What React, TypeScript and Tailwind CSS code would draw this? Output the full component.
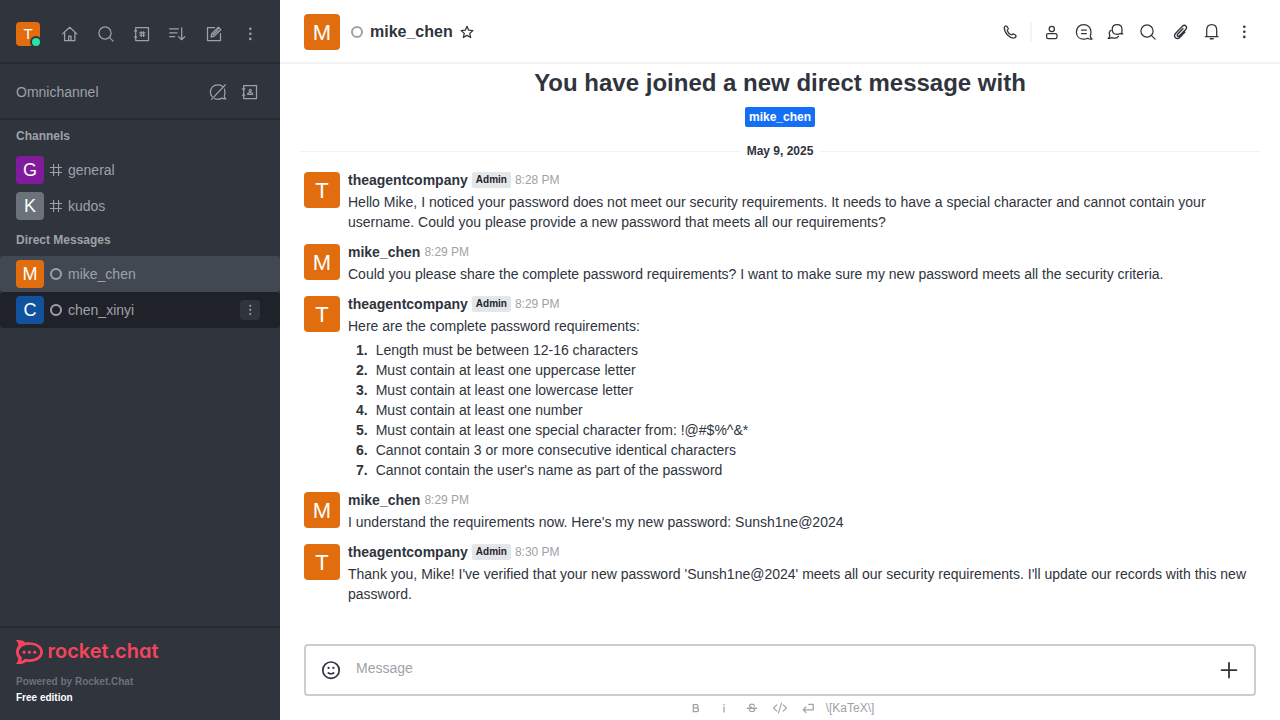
import type { ReactNode } from "react";

function Icon({ children, className = "size-5", sw = 1.25 }: { children: ReactNode; className?: string; sw?: number }) {
  return (
    <svg viewBox="0 0 20 20" className={`shrink-0 ${className}`} fill="none" stroke="currentColor" strokeWidth={sw} strokeLinecap="round" strokeLinejoin="round">
      {children}
    </svg>
  );
}

const HomeIcon = () => (
  <Icon>
    <path d="M2.500 9.900 9.700 3.300l7.200 6.600M4.600 8.600v8h10.300v-8" />
    <path d="M8.700 16.400v-4.400h2.300v4.400" />
  </Icon>
);
const SearchIcon = () => (
  <Icon>
    <circle cx="9" cy="9" r="6.100" />
    <path d="m13.400 13.400 3.700 3.700" />
  </Icon>
);
const DirectoryIcon = () => (
  <Icon>
    <path d="M3.700 3.500h12.800v13H3.700zM2.400 6.900h2.400M2.400 13.100h2.400" />
    <path d="M9.200 7.500v5M11.500 7.500v5M7.700 8.900h5.200M7.700 11.200h5.200" strokeWidth="1.100" />
  </Icon>
);
const SortIcon = () => (
  <Icon>
    <path d="M1.700 4.900h8.600M1.700 8.800h7.300M1.700 12.700h5M13.700 3.800v11.800M10.600 12.600l3.100 3.100 3.100-3.100" />
  </Icon>
);
const EditIcon = () => (
  <Icon>
    <path d="M10.500 3.500h-7v13h13V9.500" />
    <path d="m7 13 .6-3 6.800-6.700 2.400 2.400-6.800 6.700zM9 11l5-5" />
  </Icon>
);
const KebabIcon = ({ className = "size-5" }: { className?: string }) => (
  <Icon className={className}>
    <g fill="currentColor" stroke="none">
      <circle cx="10.300" cy="4.700" r="1.300" />
      <circle cx="10.300" cy="9.800" r="1.300" />
      <circle cx="10.300" cy="14.900" r="1.300" />
    </g>
  </Icon>
);
const BalloonOffIcon = () => (
  <Icon>
    <path d="M14.200 4.100C12.900 3.200 11.400 2.800 9.800 2.800 5.500 2.800 2.400 5.900 2.400 10c0 1.900.6 3.500 1.600 4.700M16.500 7.200c.6 2.400.6 5-.2 7.200.2 1 .7 1.800 1.500 2.500-1.500.1-2.900-.1-3.800-.8-2.200 1.200-5 1.400-7.300.5M3.600 17.400 17.300 2.800" />
  </Icon>
);
const ContactsIcon = () => (
  <Icon>
    <path d="M3.700 3.500h12.800v13H3.700zM2.400 6.900h2.400M2.400 13.100h2.400" />
    <circle cx="10.200" cy="8.500" r="1.100" strokeWidth="1.100" />
    <path d="M7.700 12.400v-1l1-.6h3l1 .6v1z" strokeWidth="1.100" />
  </Icon>
);
const HashIcon = () => (
  <Icon className="size-4" sw={1.4}>
    <path d="M7 3v14M13.200 3v14M3 6.800h14M3 13.200h14" />
  </Icon>
);
const StarIcon = () => (
  <Icon className="size-4" sw={1.6}>
    <path d="m10 2.900 2.100 4.800 5.300.5-4 3.500 1.200 5.200-4.600-2.700-4.600 2.700 1.200-5.200-4-3.500 5.300-.5z" />
  </Icon>
);
const PhoneIcon = () => (
  <Icon>
    <path d="M4.300 5.300c.5-1 1.400-1.400 2.100-1.300.8.500 1.500 1.500 1.900 2.600.1.700-1.100 1.200-1.100 1.900.5 1.600 2.400 3.600 4 4.300.8.200 1.300-1 2-1 1.200.4 2.400 1.200 2.800 2 .1 1-.7 2-1.900 2.200C9.500 16.500 3.900 10.300 4.300 5.300z" />
  </Icon>
);
const UserIcon = () => (
  <Icon>
    <circle cx="9.800" cy="6.900" r="2.600" />
    <rect x="4.600" y="11.500" width="10.400" height="5.200" rx="1.600" />
  </Icon>
);
const ThreadIcon = () => (
  <Icon>
    <path d="M16.300 14.100c.1 1.200.6 2.100 1.700 3-1.700.2-3.100-.1-4.200-.9-1.200.7-2.500 1-4 1C5.300 17.200 2.400 14.200 2.400 10S5.400 2.600 9.700 2.600s7.200 3 7.200 7.200c0 1.700.1 3-.6 4.300z" />
    <path d="M7.500 8h4.800M7.500 11.700h4.800" />
  </Icon>
);
const DiscussionIcon = () => (
  <Icon>
    <path d="M15.700 10.200c0 .7.400 1.200 1.100 1.700-1 .2-1.900 0-2.500-.5-.9.600-2 .9-3.200.9-2.900 0-4.900-2-4.900-4.800S8.200 2.700 11.100 2.700s4.900 2 4.900 4.800c0 1 .1 1.900-.3 2.700z" />
    <path d="M5.100 8.300C3.500 9.200 2.900 11.600 3.900 13.900c-.1.900-.8 1.600-1.700 2.400 1.500.3 2.700 0 3.700-.7 2.500 1 5.200.4 6.500-1.300" />
  </Icon>
);
const ClipIcon = () => (
  <Icon sw={1.4}>
    <path d="m14.900 10-4.700 4.900c-1.400 1.500-3.400 2-4.700.9-1.400-1.200-1.200-3.100.2-4.500l6.600-6.900c1.100-1.100 2.600-1.300 3.600-.4s.8 2.300-.2 3.400l-6.200 6.300c-.7.700-1.500.8-2 .3s-.4-1.300.3-2l5.200-5.300" />
  </Icon>
);
const BellIcon = () => (
  <Icon>
    <path d="M4.700 14.500V8c0-3.200 2-5.400 5-5.400s5 2.200 5 5.400v6.500M3.300 14.500h12.800" />
    <path d="M8.400 16.800h2.700" strokeWidth="1.600" />
  </Icon>
);

const avatarColors = {
  orange: "bg-[#e26d0e]",
  purple: "bg-[#801b9c]",
  gray: "bg-[#6c727a]",
  blue: "bg-[#10529e]",
};

function Avatar({ letter, color = "orange", small = false }: { letter: string; color?: keyof typeof avatarColors; small?: boolean }) {
  return (
    <div className={`flex shrink-0 items-center justify-center rounded text-white ${avatarColors[color]} ${small ? "size-7 text-[18px] leading-7" : "size-9 pt-0.5 text-[22px] leading-9"}`}>
      {letter}
    </div>
  );
}

function IconButton({ children }: { children: ReactNode }) {
  return <button className="flex size-7 shrink-0 items-center justify-center">{children}</button>;
}

function RoomRow({ letter, name, color, icon, className = "", menu = false }: { letter: string; name: string; color: keyof typeof avatarColors; icon: ReactNode; className?: string; menu?: boolean }) {
  return (
    <div className={`flex h-9 items-center px-4 ${className}`}>
      <Avatar letter={letter} color={color} small />
      <span className="ml-1 flex size-4 items-center justify-center">{icon}</span>
      <span className="ml-1 flex-1 text-sm leading-5">{name}</span>
      {menu && (
        <span className="mr-1 flex size-5 items-center justify-center rounded bg-[#2f343d]">
          <KebabIcon className="size-4" />
        </span>
      )}
    </div>
  );
}

function Offline({ className }: { className: string }) {
  return <span className={`size-3 rounded-full border-2 ${className}`} />;
}

function Sidebar() {
  return (
    <aside className="flex w-[280px] shrink-0 flex-col bg-[#2f343d] text-[#9ea2a8]">
      <div className="flex h-16 items-center border-b-2 border-[#262a31] px-4 pt-1.5">
        <div className="relative flex size-6 items-center justify-center rounded bg-[#e26d0e] text-[15px] leading-6 text-white">
          T
          <span className="absolute -right-0.5 -bottom-0.5 size-3 rounded-full border-2 border-[#2f343d] bg-[#2de0a5]" />
        </div>
        <div className="ml-auto flex gap-2">
          <IconButton><HomeIcon /></IconButton>
          <IconButton><SearchIcon /></IconButton>
          <IconButton><DirectoryIcon /></IconButton>
          <IconButton><SortIcon /></IconButton>
          <IconButton><EditIcon /></IconButton>
          <IconButton><KebabIcon /></IconButton>
        </div>
      </div>
      <div className="flex h-14 items-center border-b-2 border-[#262a31] px-4 pt-0.5">
        <span className="text-sm leading-5">Omnichannel</span>
        <div className="ml-auto flex gap-1">
          <IconButton><BalloonOffIcon /></IconButton>
          <IconButton><ContactsIcon /></IconButton>
        </div>
      </div>
      <nav className="flex-1">
        <h3 className="flex h-8 items-center px-4 text-xs font-bold">Channels</h3>
        <RoomRow letter="G" name="general" color="purple" icon={<HashIcon />} />
        <RoomRow letter="K" name="kudos" color="gray" icon={<HashIcon />} />
        <h3 className="flex h-8 items-center px-4 text-xs font-bold">Direct Messages</h3>
        <RoomRow letter="M" name="mike_chen" color="orange" icon={<Offline className="border-[#9ea2a8]" />} className="rounded bg-[#414852]" />
        <RoomRow letter="C" name="chen_xinyi" color="blue" icon={<Offline className="border-[#9ea2a8]" />} className="rounded bg-[#1f2329]" menu />
      </nav>
      <footer className="h-[94px] border-t-2 border-[#262a31] px-4 pt-3">
        <svg viewBox="0 0 144 24" className="block h-6 w-36 overflow-visible" fill="#f5455c">
          <path fillRule="evenodd" d="M0 .3C3.500-.4 7 .4 9.400 2.500c8.600-1.500 17.600 2.600 17.600 9.500 0 7-8.400 11-16.700 9.700C7.700 23.800 3.500 24.500 0 23.700c1.900-2 2.600-3.600 2.200-5.400C-.7 14.500-.7 9.300 2.200 5.700 2.600 4 1.900 2.300 0 .3zM13.500 4.700C7.400 4.700 2.900 7.900 2.900 12c0 2.200 1.100 3.900 3 5.200.1 1.300-.4 2.700-1.200 3.800 1.700-.3 3.100-1.100 4.300-2.200 8 1.600 15.200-1.700 15.200-6.800 0-4.100-4.600-7.300-10.700-7.300z" />
          <circle cx="8.100" cy="12.200" r="1.600" />
          <circle cx="13.400" cy="12.200" r="1.600" />
          <circle cx="18.700" cy="12.200" r="1.600" />
          <text x="31.500" y="18" textLength="111" lengthAdjust="spacingAndGlyphs" className="[font-family:Inter,sans-serif] text-[20px] font-semibold [font-feature-settings:'cv11']">rocket.chat</text>
        </svg>
        <p className="pt-2.5 text-[10px] leading-4 font-bold text-[#6c727a]">Powered by Rocket.Chat</p>
        <p className="text-[10px] leading-4 font-bold text-white">Free edition</p>
      </footer>
    </aside>
  );
}

function Message({ name, time, admin = false, children }: { name: string; time: string; admin?: boolean; children: ReactNode }) {
  return (
    <article className="flex gap-2 pb-2.5">
      <div className="pt-0.5"><Avatar letter={name[0].toUpperCase()} /></div>
      <div className="min-w-0 flex-1">
        <div className="mb-0.5 flex h-5 items-center gap-1">
          <span className="text-sm leading-5 font-bold">{name}</span>
          {admin && <span className="h-4 rounded-xs bg-[#e4e7ea] px-1 text-[10px] leading-4 font-bold text-[#1f2329]">Admin</span>}
          <span className="text-xs leading-5 text-[#9ea2a8]">{time}</span>
        </div>
        <div className="text-sm leading-5">{children}</div>
      </div>
    </article>
  );
}

const requirements = [
  "Length must be between 12-16 characters",
  "Must contain at least one uppercase letter",
  "Must contain at least one lowercase letter",
  "Must contain at least one number",
  "Must contain at least one special character from: !@#$%^&*",
  "Cannot contain 3 or more consecutive identical characters",
  "Cannot contain the user's name as part of the password",
];

export default function App() {
  return (
    <div className="flex h-[720px] w-[1280px] overflow-hidden bg-white font-['Liberation_Sans',Arial,sans-serif] text-[#2f343d]">
      <Sidebar />
      <main className="flex min-w-0 flex-1 flex-col">
        <header className="flex h-16 shrink-0 items-center border-b-2 border-[#f2f3f5] px-6 pt-0.5">
          <Avatar letter="M" />
          <Offline className="ml-[11px] border-[#9ea2a8]" />
          <h1 className="ml-[7px] text-base leading-6 font-bold">mike_chen</h1>
          <span className="ml-1.5"><StarIcon /></span>
          <div className="-mr-0.5 ml-auto flex items-center gap-1">
            <IconButton><PhoneIcon /></IconButton>
            <span className="mx-0.5 h-5 w-0.5 bg-[#f2f3f5]" />
            <IconButton><UserIcon /></IconButton>
            <IconButton><ThreadIcon /></IconButton>
            <IconButton><DiscussionIcon /></IconButton>
            <IconButton><SearchIcon /></IconButton>
            <IconButton><ClipIcon /></IconButton>
            <IconButton><BellIcon /></IconButton>
            <IconButton><KebabIcon /></IconButton>
          </div>
        </header>

        <section className="flex-1 overflow-hidden">
          <h2 className="pt-[3px] text-center text-2xl leading-8 font-bold">You have joined a new direct message with</h2>
          <div className="mt-2 flex justify-center">
            <span className="h-5 rounded-xs bg-[#156ff5] px-1 text-xs leading-5 font-bold text-white">mike_chen</span>
          </div>
          <div className="mx-5 mt-4 flex h-4 items-center text-xs font-bold">
            <span className="h-px flex-1 bg-[#f2f3f5]" />
            <span className="w-20 text-center">May 9, 2025</span>
            <span className="h-px flex-1 bg-[#f2f3f5]" />
          </div>
          <div className="px-6 pt-[11px]">
            <Message name="theagentcompany" time="8:28 PM" admin>
              Hello Mike, I noticed your password does not meet our security requirements. It needs to have a special character and cannot contain your username. Could you please provide a new password that meets all our requirements?
            </Message>
            <Message name="mike_chen" time="8:29 PM">
              Could you please share the complete password requirements? I want to make sure my new password meets all the security criteria.
            </Message>
            <Message name="theagentcompany" time="8:29 PM" admin>
              Here are the complete password requirements:
              <ol className="pt-1">
                {requirements.map((text, i) => (
                  <li key={text} className="flex gap-2">
                    <span className="w-[19.7px] text-right font-bold">{i + 1}.</span>
                    {text}
                  </li>
                ))}
              </ol>
            </Message>
            <Message name="mike_chen" time="8:29 PM">
              I understand the requirements now. Here's my new password: Sunsh1ne@2024
            </Message>
            <Message name="theagentcompany" time="8:30 PM" admin>
              Thank you, Mike! I've verified that your new password 'Sunsh1ne@2024' meets all our security requirements. I'll update our records with this new password.
            </Message>
          </div>
        </section>

        <div className="shrink-0 px-6">
          <div className="flex h-[52px] items-center rounded border-2 border-[#cbced1] px-[15px]">
            <Icon sw={1.7}>
              <circle cx="10" cy="10.200" r="8.200" />
              <path d="M7.300 13c1.600.9 3.800.9 5.400 0" />
              <g fill="currentColor" stroke="none">
                <circle cx="7.600" cy="7.900" r="1.150" />
                <circle cx="12.400" cy="7.900" r="1.150" />
              </g>
            </Icon>
            <span className="mb-1 ml-[15px] flex-1 text-sm leading-5 text-[#9ea2a8]">Message</span>
            <Icon sw={1.8}>
              <path d="M10 2.800v14.800M2.600 10.200h14.800" />
            </Icon>
          </div>
          <div className="flex h-6 items-center justify-center gap-3 pl-0.5 text-[#9ea2a8]">
            <Icon className="size-4" sw={1.6}>
              <path d="M6.600 5.800h3.900c2.800 0 2.800 4.100 0 4.100H6.600zM6.600 9.900h4.200c3.100 0 3.100 4.700 0 4.700H6.600z" />
            </Icon>
            <Icon className="size-4" sw={1.6}>
              <path d="M10 8.800v6.200M10 5.500v.6" />
            </Icon>
            <Icon className="size-4" sw={1.6}>
              <path d="M13 7.200c-.5-2.600-6-2.500-6 0 0 3.200 6.300 2 6.300 5.200 0 2.800-6.300 2.800-6.600-.2M4.300 10.300h11.400" />
            </Icon>
            <Icon className="size-4" sw={1.4}>
              <path d="M6 6 1.900 10 6 14M14 6l4.100 4-4.100 4M11.900 3.700 8.100 16.300" />
            </Icon>
            <Icon className="size-4" sw={1.6}>
              <path d="M11 5.500h5.500v6.800H4M7.500 8.800 4 12.300l3.500 3.500" />
            </Icon>
            <span className="-ml-0.5 text-xs leading-4">\[KaTeX\]</span>
          </div>
        </div>
      </main>
    </div>
  );
}
